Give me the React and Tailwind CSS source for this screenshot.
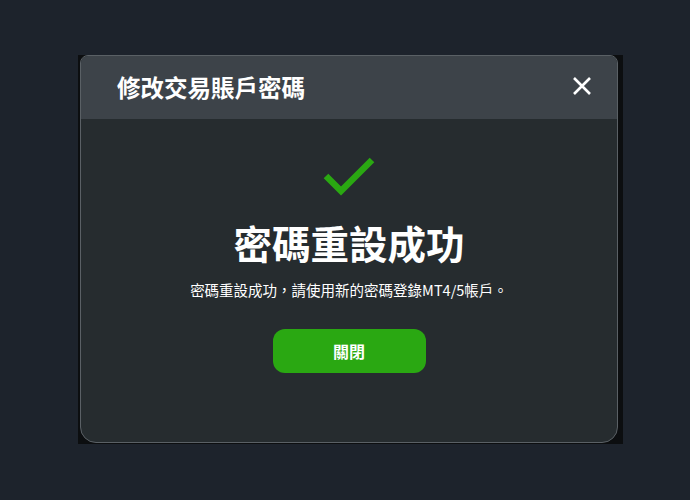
export default function App() {
  const font = { fontFamily: '"Noto Sans CJK TC", "Noto Sans", sans-serif' };
  return (
    <div className="w-[690px] h-[500px] bg-[#1d232c] pt-[55px] pl-[78px]" style={font}>
      <div className="w-[545px] h-[389px] bg-[#0c0e10] pl-[2px] pr-[5px]">
        <div className="h-[388px] rounded-t-lg rounded-b-2xl border border-[#5a6065] overflow-hidden bg-[#262c2f] flex flex-col">
          <div className="h-[63px] shrink-0 bg-[#3d4349] flex items-center justify-between pl-[36px] pr-[25px]">
            <span className="text-[23.5px] font-bold text-white leading-none">修改交易賬戶密碼</span>
            <div className="w-[20px] h-[20px] flex items-center justify-center -mt-[3px]">
              <svg width="20" height="20" viewBox="0 0 20 20">
                <path d="M2 2 L18 18 M18 2 L2 18" stroke="#ffffff" strokeWidth="2.6" strokeLinecap="butt" />
              </svg>
            </div>
          </div>
          <div className="flex flex-col items-center pt-[33px]">
            <svg width="56" height="46" viewBox="0 0 56 46">
              <polyline points="5,24 20,39 51,8" fill="none" stroke="#2aa812" strokeWidth="6.5" strokeLinejoin="miter" />
            </svg>
            <div className="mt-[20px] text-[38.5px] leading-[48px] font-bold text-white">密碼重設成功</div>
            <div className="mt-[14px] text-[14.5px] leading-[20px] text-white">密碼重設成功，請使用新的密碼登錄MT4/5帳戶。</div>
            <button className="mt-[29px] w-[153px] h-[44px] rounded-xl bg-[#2aa812] text-white text-[16px] font-bold flex items-center justify-center">
              關閉
            </button>
          </div>
        </div>
      </div>
    </div>
  );
}
